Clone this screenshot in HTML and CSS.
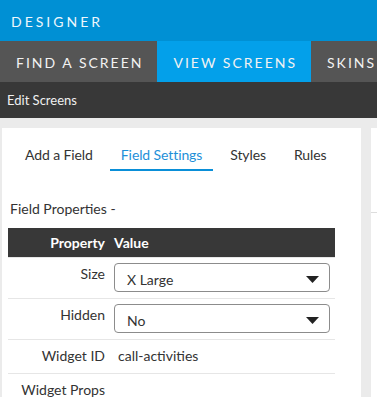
FILE: index.html
```html
<!DOCTYPE html>
<html lang="en">
<head>
    <meta charset="UTF-8">
    <meta name="viewport" content="width=device-width, initial-scale=1.0">
    <title>Designer</title>
    <link rel="stylesheet" href="styles.css">
</head>
<body>
    <header class="app-header">DESIGNER</header>

    <nav class="main-nav">
        <a class="nav-tab">FIND A SCREEN</a>
        <a class="nav-tab active">VIEW SCREENS</a>
        <a class="nav-tab">SKINS</a>
    </nav>

    <div class="sub-bar">Edit Screens</div>

    <div class="workspace">
        <div class="panel">
            <div class="panel-tabs">
                <span class="panel-tab">Add a Field</span>
                <span class="panel-tab active">Field Settings</span>
                <span class="panel-tab">Styles</span>
                <span class="panel-tab">Rules</span>
            </div>

            <div class="section-title">Field Properties -</div>

            <div class="props-table">
                <div class="props-head">
                    <div class="col-label">Property</div>
                    <div class="col-value">Value</div>
                </div>
                <div class="props-row">
                    <div class="col-label">Size</div>
                    <div class="col-value">
                        <div class="dropdown">
                            <span>X Large</span>
                            <svg class="caret" width="13" height="7" viewBox="0 0 13 7"><path d="M0 0h13L6.5 7z" fill="#222"/></svg>
                        </div>
                    </div>
                </div>
                <div class="props-row">
                    <div class="col-label">Hidden</div>
                    <div class="col-value">
                        <div class="dropdown">
                            <span>No</span>
                            <svg class="caret" width="13" height="7" viewBox="0 0 13 7"><path d="M0 0h13L6.5 7z" fill="#222"/></svg>
                        </div>
                    </div>
                </div>
                <div class="props-row text-row">
                    <div class="col-label">Widget ID</div>
                    <div class="col-value plain">call-activities</div>
                </div>
                <div class="props-row text-row">
                    <div class="col-label">Widget Props</div>
                    <div class="col-value plain"></div>
                </div>
            </div>
        </div>

        <div class="side-panel">
            <div class="side-head"></div>
        </div>
    </div>
</body>
</html>
```

FILE: styles.css
```css
body {
    margin: 0;
    font-family: Lato, "Open Sans", sans-serif;
    font-size: 14px;
    color: #333333;
    background-color: #ebebeb;
    overflow: hidden;
}

.app-header {
    height: 41px;
    line-height: 43px;
    padding-left: 11px;
    background-color: #0090d4;
    color: #eef7fc;
    letter-spacing: 3px;
    font-size: 14px;
}

.main-nav {
    display: flex;
    height: 41px;
    background-color: #555555;
    white-space: nowrap;
}

.nav-tab {
    display: block;
    padding: 0 14px 0 16px;
    line-height: 43px;
    color: #f2f2f2;
    letter-spacing: 2px;
    font-size: 14px;
}

.nav-tab.active {
    background-color: #03a0ea;
}

.sub-bar {
    height: 36px;
    line-height: 36px;
    padding-left: 7px;
    background-color: #383838;
    color: #f0f0f0;
    font-size: 13px;
}

.workspace {
    display: flex;
    gap: 10px;
    padding: 10px 0 0 2px;
}

.panel {
    flex: 0 0 359px;
    height: 300px;
    background-color: #ffffff;
    padding: 17px 0 0 6px;
    box-sizing: border-box;
}

.side-panel {
    flex: 1;
    height: 300px;
    background-color: #ffffff;
}

.side-head {
    height: 84px;
    border-bottom: 1px solid #dddddd;
}

.panel-tabs {
    display: flex;
    gap: 6px;
    padding-left: 6px;
}

.panel-tab {
    padding: 0 11px 4px;
    line-height: 20px;
    font-size: 14px;
    letter-spacing: -0.1px;
    color: #333333;
    border-bottom: 2px solid transparent;
}

.panel-tab.active {
    color: #1e90d8;
    border-bottom-color: #0a8fd8;
}

.section-title {
    margin-top: 28px;
    line-height: 20px;
    padding-left: 2px;
    font-size: 14px;
    color: #333333;
}

.props-table {
    margin-top: 9px;
    width: 327px;
}

.props-head {
    display: flex;
    height: 29px;
    line-height: 29px;
    background-color: #383838;
    color: #ffffff;
    font-weight: bold;
}

.col-label {
    flex: 0 0 106px;
    padding-right: 9px;
    box-sizing: border-box;
    text-align: right;
}

.col-value {
    flex: 1;
    padding-right: 5px;
}

.props-row {
    display: flex;
    padding: 5px 0 6px;
    border-top: 1px solid #e6e6e6;
}

.props-row .col-label {
    padding-top: 1px;
    line-height: 20px;
}

.text-row {
    padding: 6px 0 7px;
}

.text-row .col-label {
    padding-top: 0;
}

.col-value.plain {
    padding-left: 4px;
    line-height: 20px;
}

.dropdown {
    display: flex;
    align-items: center;
    justify-content: space-between;
    height: 29px;
    box-sizing: border-box;
    padding: 3px 10px 0 12px;
    border: 1px solid #8c8c8c;
    border-radius: 4px;
    font-size: 14px;
}
```
